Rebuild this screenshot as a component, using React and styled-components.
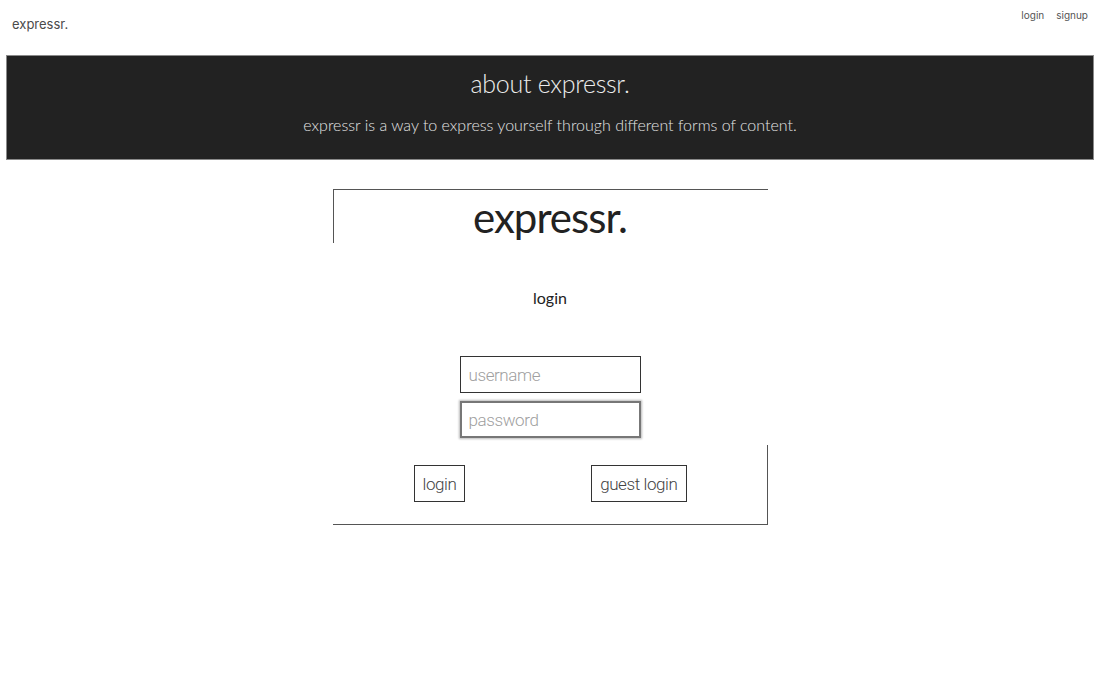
import React from "react";
import styled, { createGlobalStyle, css } from "styled-components";

const GlobalStyle = createGlobalStyle`
  body {
    margin: 0;
    background: #fff;
    font-family: Lato, "Open Sans", sans-serif;
  }
`;

// barra do topo
const TopBar = styled.header`
  height: 55px;
  display: flex;
  justify-content: space-between;
  align-items: flex-start;
  padding: 0 12px;
  box-sizing: border-box;
`;

const Brand = styled.div`
  font-family: Inter, sans-serif;
  font-size: 13px;
  line-height: 16px;
  color: #4a4a4a;
  padding-top: 16px;
`;

const Nav = styled.nav`
  display: flex;
  gap: 12px;
  padding-top: 9px;
`;

const NavLink = styled.a`
  font-family: Inter, sans-serif;
  font-size: 10px;
  line-height: 13px;
  color: #555;
  text-decoration: none;
  cursor: pointer;
`;

const About = styled.section`
  margin: 0 6px;
  height: 105px;
  box-sizing: border-box;
  background: #222;
  border: 1px solid #8a8a8a;
  display: flex;
  flex-direction: column;
  align-items: center;
  color: #ececec;
`;

const AboutTitle = styled.h2`
  margin: 11px 0 0;
  font-size: 25px;
  line-height: 32px;
  font-weight: 300;
  letter-spacing: -0.3px;
`;

const AboutText = styled.p`
  margin: 16px 0 0;
  font-size: 16px;
  line-height: 20px;
  font-weight: 300;
  color: #e4e4e4;
`;

// cartao de login com cantos decorativos
const Card = styled.div`
  position: relative;
  width: 435px;
  margin: 29px auto 0;
  padding-bottom: 23px;
  display: flex;
  flex-direction: column;
  align-items: center;

  &::before,
  &::after {
    content: "";
    position: absolute;
    width: 100%;
    box-sizing: border-box;
    pointer-events: none;
  }

  &::before {
    top: 0;
    left: 0;
    height: 54px;
    border-top: 1px solid #555;
    border-left: 1px solid #555;
  }

  &::after {
    bottom: 0;
    right: 0;
    height: 80px;
    border-right: 1px solid #555;
    border-bottom: 1px solid #555;
  }
`;

const CardBrand = styled.h1`
  margin: 0;
  font-size: 42px;
  line-height: 56px;
  font-weight: 400;
  color: #222;
  letter-spacing: -1px;
`;

const CardTitle = styled.h3`
  margin: 43px 0 0;
  font-size: 16px;
  line-height: 20px;
  font-weight: 400;
  color: #222;
`;

const Form = styled.form`
  margin-top: 48px;
  display: flex;
  flex-direction: column;
  align-items: center;
  gap: 8px;
`;

const Input = styled.input`
  width: 181px;
  height: 37px;
  box-sizing: border-box;
  border: 1px solid #333;
  padding: 0 8px;
  font-family: Roboto, sans-serif;
  font-weight: 300;
  font-size: 17px;
  letter-spacing: -0.4px;
  color: #333;
  background: #fff;
  outline: none;

  &::placeholder {
    color: #a0a0a0;
  }

  ${(p) =>
    p.$focused &&
    css`
      border: 2px solid #777;
      padding: 0 7px;
      box-shadow: 0 0 2px 1px #bbb;
    `}
`;

const Actions = styled.div`
  width: 273px;
  margin-top: 27px;
  display: flex;
  justify-content: space-between;
`;

const Button = styled.button`
  height: 37px;
  box-sizing: border-box;
  padding: 0 8px;
  border: 1px solid #333;
  background: #fff;
  font-family: Roboto, sans-serif;
  font-weight: 300;
  font-size: 17px;
  letter-spacing: -0.4px;
  color: #444;
  cursor: pointer;
`;

const App = () => {
  return (
    <>
      <GlobalStyle />
      <TopBar>
        <Brand>expressr.</Brand>
        <Nav>
          <NavLink>login</NavLink>
          <NavLink>signup</NavLink>
        </Nav>
      </TopBar>
      <About>
        <AboutTitle>about expressr.</AboutTitle>
        <AboutText>expressr is a way to express yourself through different forms of content.</AboutText>
      </About>
      <Card>
        <CardBrand>expressr.</CardBrand>
        <CardTitle>login</CardTitle>
        <Form onSubmit={(e) => e.preventDefault()}>
          <Input placeholder="username" />
          <Input type="password" placeholder="password" $focused autoFocus />
        </Form>
        <Actions>
          <Button>login</Button>
          <Button>guest login</Button>
        </Actions>
      </Card>
    </>
  );
};

export default App;
